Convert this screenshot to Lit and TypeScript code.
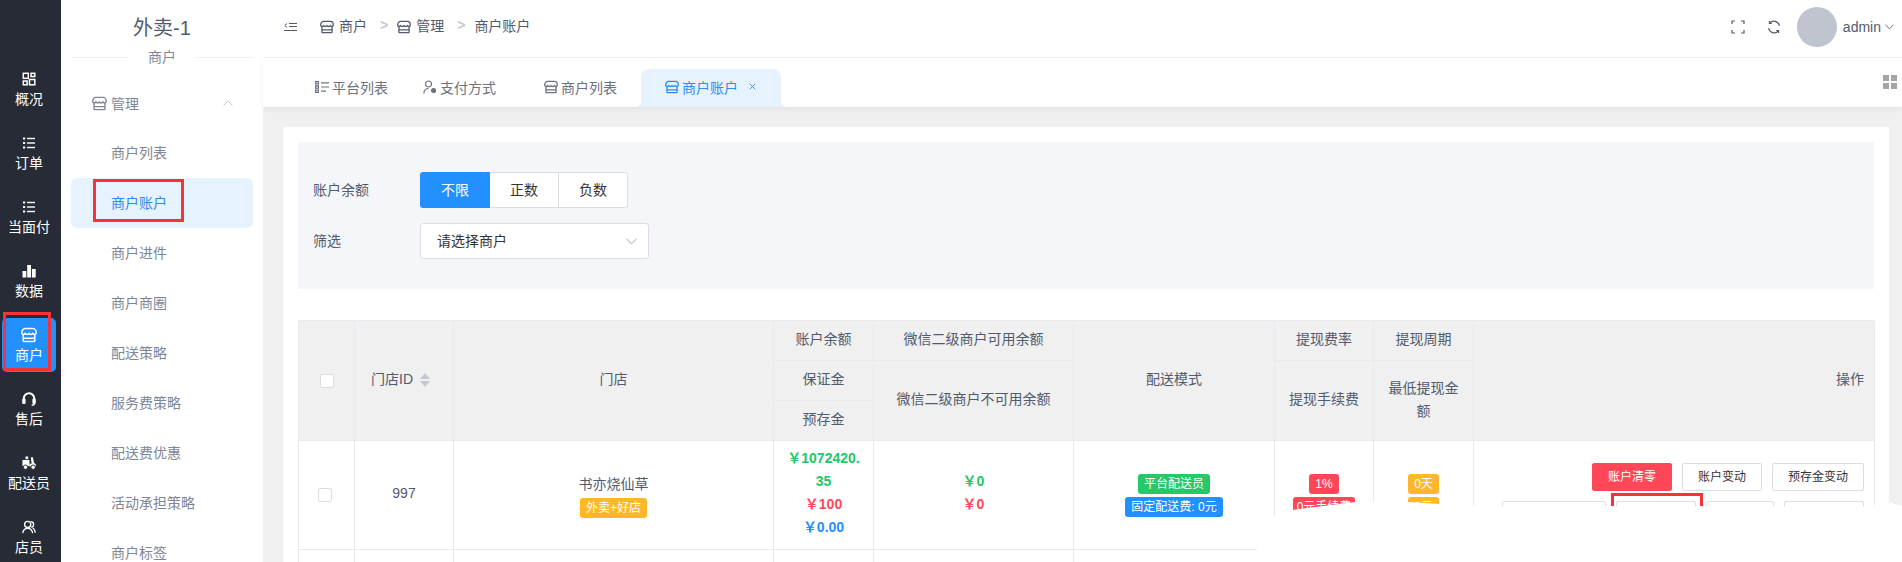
import { LitElement, html, css, svg } from "lit";
import { customElement } from "lit/decorators.js";

const storeIcon = html`<svg class="ic" viewBox="0 0 16 16" fill="none" stroke="currentColor" stroke-width="1.500" stroke-linejoin="round" stroke-linecap="round"><path d="M4.200 1.500h7.600c1.900 0 3.400 1.900 3.400 4.200 0 1-.7 1.700-1.600 1.700-.9 0-1.600-.6-1.800-1.300-.2.7-1 1.300-1.900 1.300s-1.700-.6-1.900-1.300c-.2.7-1 1.300-1.900 1.300s-1.700-.6-1.900-1.300c-.2.7-.9 1.300-1.800 1.300C1.500 7.400.8 6.700.8 5.700c0-2.300 1.500-4.200 3.400-4.200z"/><path d="M2.200 7.400v6.400c0 .4.300.7.700.7h10.200c.4 0 .7-.3.700-.7V7.400M2.200 11.300h11.600"/></svg>`;
const listIcon = html`<svg class="ic" viewBox="0 0 14 14" fill="currentColor"><rect x="1" y="1.500" width="2.200" height="2"/><rect x="5" y="1.800" width="8" height="1.400"/><rect x="1" y="6" width="2.200" height="2"/><rect x="5" y="6.300" width="8" height="1.400"/><rect x="1" y="10.500" width="2.200" height="2"/><rect x="5" y="10.800" width="8" height="1.400"/></svg>`;

const navIcons: Record<string, unknown> = {
  dash: html`<svg class="ic" viewBox="0 0 14 14" fill="none" stroke="currentColor" stroke-width="1.500"><rect x="1.300" y="1.300" width="5" height="5"/><rect x="9" y="1.300" width="3.800" height="3.200"/><rect x="1.300" y="9" width="3.800" height="3.800"/><rect x="7.500" y="7.500" width="5.300" height="5.300"/></svg>`,
  list: listIcon,
  data: html`<svg class="ic" viewBox="0 0 14 14" fill="currentColor"><rect x="0.500" y="7" width="3.800" height="6.500"/><rect x="5.200" y="1" width="3.800" height="12.500"/><rect x="9.900" y="5" width="3.800" height="8.500"/></svg>`,
  store: storeIcon,
  head: html`<svg class="ic" viewBox="1 1 14 14" fill="none" stroke="currentColor" stroke-width="2"><path d="M2.800 10V7.500a5.200 5.200 0 0 1 10.400 0V10"/><rect x="1.200" y="7.500" width="3.400" height="5.500" rx="1.200" fill="currentColor" stroke="none"/><rect x="11.400" y="7.500" width="3.400" height="5.500" rx="1.200" fill="currentColor" stroke="none"/><path d="M13.500 12c0 1.500-1 2.300-2.800 2.300" stroke-width="1.400"/></svg>`,
  bike: html`<svg class="ic" viewBox="0 0 16 16" fill="currentColor"><path d="M4 .5h3v3H4z"/><rect x=".5" y="4.500" width="8" height="7"/><path d="M10 1.500h2.500l1.200 6.300 2 1.700v2.500H8.500V8.800H11z"/><circle cx="4" cy="12.800" r="2.500" stroke="#272b35" stroke-width="1.100"/><circle cx="12.700" cy="12.800" r="2.500" stroke="#272b35" stroke-width="1.100"/></svg>`,
  staff: html`<svg class="ic" viewBox="0 0 16 16" fill="none" stroke="currentColor" stroke-width="1.500" stroke-linecap="round"><circle cx="6.500" cy="5" r="3.500"/><path d="M1 14.500c.4-3 2.500-5 5.500-5s5 2 5.500 5"/><path d="M10.500 1.800c1.800.3 2.800 1.600 2.800 3.200 0 1.500-.9 2.700-2.200 3.100M12.700 9.500c1.300.8 2.100 2.500 2.300 4.500"/></svg>`,
};

const nav = [
  ["dash", "概况"], ["list", "订单"], ["list", "当面付"], ["data", "数据"],
  ["store", "商户"], ["head", "售后"], ["bike", "配送员"], ["staff", "店员"],
];
const subItems = ["商户列表", "商户账户", "商户进件", "商户商圈", "配送策略", "服务费策略", "配送费优惠", "活动承担策略", "商户标签"];

@customElement("app-root")
export class AppRoot extends LitElement {
  static styles = css`
    :host { display: block; position: relative; width: 1902px; height: 562px; overflow: hidden; background: #f0f0f0;
      font-family: "Liberation Sans", "Noto Sans CJK SC", sans-serif; font-size: 14px; color: #515a6e; }
    * { box-sizing: border-box; }
    .ic { display: block; width: 14px; height: 14px; flex: none; }
    .app { display: flex; height: 562px; }

    .rail { width: 61px; flex: none; background: #272b35; padding: 62px 5px 0 2px; display: flex; flex-direction: column; gap: 10px; color: #fff; }
    .rail-item { position: relative; height: 54px; flex: none; display: flex; flex-direction: column; align-items: center; padding-top: 10px; border-radius: 5px; line-height: 20px; }
    .rail-item .ic { width: 14px; height: 14px; margin-bottom: 3px; }
    .rail-item.on { background: #2290ff; }
    .rail-item.on .ic { width: 16px; height: 16px; margin-top: -1px; margin-bottom: 2px; }
    .mark { position: absolute; border: 3px solid #f73339; pointer-events: none; }
    .rail-item .mark { left: 1px; top: -6px; width: 48px; height: 59px; }

    .side { width: 202px; flex: none; background: #fff; padding: 0 10px; overflow: hidden; }
    .brand { height: 57px; padding-top: 13px; text-align: center; font-size: 20px; line-height: 30px; }
    .rule { height: 1px; background: #f0f0f0; display: flex; justify-content: center; align-items: center; }
    .rule span { background: #fff; padding: 0 20px 2px; line-height: 20px; color: #808695; }
    .group { height: 50px; margin-top: 20px; display: flex; align-items: center; padding-left: 21px; color: #808695; }
    .group .ic { width: 15px; height: 15px; margin-right: 4px; }
    .group .chev { margin-left: auto; margin-right: 20px; width: 10px; height: 6px; }
    .sub { display: flex; flex-direction: column; }
    .sub-item { position: relative; height: 50px; flex: none; display: flex; align-items: center; padding: 0 0 2px 40px; color: #808695; border-radius: 6px; }
    .sub-item.on { background: #e6f3ff; color: #2d8cf0; }
    .sub-item .mark { left: 22px; top: 1px; width: 91px; height: 43px; }

    .main { flex: 1; min-width: 0; display: flex; flex-direction: column; }
    .top { height: 58px; flex: none; background: #fff; border-bottom: 1px solid #f3f3f3; display: flex; align-items: center; padding: 0 8px 4px 21px; }
    .crumb { display: flex; align-items: center; }
    .crumb .ic { margin-right: 5px; }
    .crumb span { margin-bottom: 3px; }
    .collapse { width: 13px; height: 13px; margin-right: 23px; }
    .sep { color: #c5c8ce; margin: 0 9px 3px 13px; font-weight: bold; }
    .tools { margin-left: auto; display: flex; align-items: center; }
    .tools .ic { margin-right: 22px; }
    .tools .ic:nth-child(2) { margin-right: 16px; }
    .avatar { width: 40px; height: 40px; border-radius: 50%; background: #c0c4cf; margin-right: 6px; }
    .chev-d { width: 9px; height: 6px; margin-left: 4px; }

    .tabs { height: 49px; flex: none; background: #fff; box-shadow: 0 2px 6px rgba(0,0,0,.06); display: flex; align-items: flex-end; padding-left: 52px; position: relative; z-index: 1; }
    .tab { height: 38px; display: flex; align-items: center; gap: 3px; padding-bottom: 3px; color: #6b7280; }
    .tab.t2 { margin-left: 35px; }
    .tab.t3 { margin-left: 48px; }
    .tab.on { position: relative; margin-left: 24px; width: 140px; padding-left: 24px; background: #e6f3ff; color: #2d8cf0; border-radius: 8px 8px 0 0; }
    .tab.on::before, .tab.on::after { content: ""; position: absolute; bottom: 0; width: 7px; height: 7px; }
    .tab.on::before { left: -7px; background: radial-gradient(circle at 0 0, transparent 7px, #e6f3ff 7.500px); }
    .tab.on::after { right: -7px; background: radial-gradient(circle at 100% 0, transparent 7px, #e6f3ff 7.500px); }
    .close { width: 7px; height: 7px; margin-left: 8px; }
    .grid-ic { position: absolute; right: 5px; top: 17px; width: 14px; height: 14px; display: grid; grid-template-columns: 6px 6px; gap: 2px; }
    .grid-ic i { background: #a5a5a5; }

    .body { flex: 1; min-height: 0; padding: 20px 13px 0 20px; overflow: hidden; }
    .card { background: #fff; height: 100%; padding: 15px 15px 0; overflow: hidden; }
    .filter { height: 147px; background: #f5f6fa; padding: 30px 15px 0; display: flex; flex-direction: column; gap: 15px; }
    .f-row { display: flex; align-items: center; height: 36px; }
    .f-label { width: 107px; flex: none; padding-bottom: 2px; }
    .radios { display: flex; height: 36px; color: #333; }
    .radio { display: flex; align-items: center; justify-content: center; width: 69px; padding-bottom: 2px; background: #fff; border: 1px solid #dcdee2; border-left: 0; }
    .radio:last-child { border-radius: 0 3px 3px 0; }
    .radio.on { width: 70px; background: #2290ff; color: #fff; border: 0; border-radius: 3px 0 0 3px; }
    .select { width: 229px; height: 36px; background: #fff; border: 1px solid #dcdee2; border-radius: 3px; display: flex; align-items: center; padding: 0 11px 2px 16px; color: #333; justify-content: space-between; }
    .select svg { width: 11px; height: 7px; margin-top: 2px; }

    table { margin-top: 31px; border-collapse: collapse; table-layout: fixed; width: 1576px; }
    th, td { border: 1px solid #e8eaf0; text-align: center; padding: 0 12px; font-weight: normal; line-height: 23px; word-break: break-all; }
    th { height: 40px; padding-bottom: 2px; background: #f0f0f0; }
    td { height: 109px; padding-top: 8px; padding-bottom: 8px; }
    td.txt { padding-top: 6px; padding-bottom: 10px; }
    .r { text-align: right; padding-right: 10px; }
    .cb { display: block; margin: 2px auto 0; width: 14px; height: 14px; background: #fff; border: 1px solid #dcdee2; border-radius: 2px; }
    td .cb { margin: 0 0 0 7px; }
    .sort { display: inline-flex; flex-direction: column; gap: 2px; margin: 0 7px 0 7px; vertical-align: middle; }
    .sort i { width: 0; height: 0; border-left: 5px solid transparent; border-right: 5px solid transparent; }
    .sort i:first-child { border-bottom: 6px solid #c5c8ce; }
    .sort i:last-child { border-top: 6px solid #c5c8ce; }
    .val { display: block; font-weight: bold; }
    .name { display: block; margin-bottom: 2px; }
    .g { color: #23c76a; } .rd { color: #ff4757; } .b { color: #2290ff; }
    .tag { display: inline-block; vertical-align: top; height: 20px; line-height: 20px; padding: 0 6px; font-size: 12px; color: #fff; border-radius: 3px; white-space: nowrap; }
    .tag.tight { padding: 0 4px; }
    .tag-wrap { display: flex; flex-direction: column; align-items: center; gap: 3px; }
    .tg { background: #26c967; } .ty { background: #ffb72a; } .tb { background: #2290ff; } .tr { background: #ff4757; }
    .ops { padding: 22px 10px 0; vertical-align: top; }
    .ops-row { display: flex; justify-content: flex-end; gap: 10px; margin-bottom: 10px; }
    .btn { height: 28px; display: flex; align-items: center; justify-content: center; font-size: 12px; line-height: 1; color: #333; border: 1px solid #dcdee2; border-radius: 2px; background: #fff; white-space: nowrap; }
    .btn.danger { background: #ff4757; border-color: #ff4757; color: #fff; }
    .btn.marked { position: relative; }
    .btn.marked .mark { left: -6px; top: -9px; width: 92px; height: 43px; }
    .patch { position: absolute; left: 0; top: 0; width: 1902px; height: 562px; pointer-events: none; }
  `;

  private chev(d: string, cls: string, color: string) {
    return html`<svg class=${cls} viewBox="0 0 10 6" fill="none" stroke=${color} stroke-width="1"><path d=${d}/></svg>`;
  }

  render() {
    return html`
      <div class="app">
        <nav class="rail">
          ${nav.map(([ic, label]) => html`
            <div class="rail-item ${label === "商户" ? "on" : ""}">
              ${navIcons[ic]}<span>${label}</span>
              ${label === "商户" ? html`<div class="mark"></div>` : ""}
            </div>`)}
        </nav>
        <aside class="side">
          <div class="brand">外卖-1</div>
          <div class="rule"><span>商户</span></div>
          <div class="group">${storeIcon}<span>管理</span>${this.chev("M.5 5.500 5 1l4.500 4.500", "chev", "#c5c8ce")}</div>
          <div class="sub">
            ${subItems.map((s) => html`<div class="sub-item ${s === "商户账户" ? "on" : ""}">${s}${s === "商户账户" ? html`<div class="mark"></div>` : ""}</div>`)}
          </div>
        </aside>
        <div class="main">
          <header class="top">
            <svg class="collapse" viewBox="0 0 13 13" fill="none" stroke="#515a6e" stroke-width="1"><path d="M5 3.500H13M5 6.500H13M0 10.500H13M3 3.500 .8 5.500 3 7.500"/></svg>
            <div class="crumb">
              ${storeIcon}<span>商户</span><span class="sep">&gt;</span>
              ${storeIcon}<span>管理</span><span class="sep">&gt;</span>
              <span>商户账户</span>
            </div>
            <div class="tools">
              <svg class="ic" viewBox="0 0 14 14" fill="none" stroke="#515a6e" stroke-width="1.200"><path d="M1 4V1h3M10 1h3v3M13 10v3h-3M4 13H1v-3"/></svg>
              <svg class="ic" viewBox="0 0 14 14" fill="none" stroke="#515a6e" stroke-width="1.100"><path d="M12.400 5.800A5.600 5.600 0 0 0 2.600 3.200M1.600 8.200a5.600 5.600 0 0 0 9.800 2.600"/><path d="M2.400 1v2.400h2.400M11.600 13v-2.400H9.200"/></svg>
              <div class="avatar"></div>
              <span>admin</span>
              ${this.chev("M.5.500 5 5l4.500-4.500", "chev-d", "#515a6e")}
            </div>
          </header>
          <div class="tabs">
            <div class="tab">
              <svg class="ic" viewBox="0 0 14 14" fill="none" stroke="currentColor" stroke-width="1.200"><rect x=".6" y="1.600" width="2.800" height="2.400"/><rect x=".6" y="5.800" width="2.800" height="2.400"/><rect x=".6" y="10" width="2.800" height="2.400"/><path d="M6 2.800h8M6 7h8M6 11.200h5"/></svg>
              <span>平台列表</span>
            </div>
            <div class="tab t2">
              <svg class="ic" viewBox="0 0 14 14" fill="none" stroke="currentColor" stroke-width="1.200"><circle cx="5.500" cy="4" r="3"/><path d="M.8 13.500c.3-3 2-5 4.700-5"/><circle cx="10.500" cy="10.500" r="2" fill="currentColor"/></svg>
              <span>支付方式</span>
            </div>
            <div class="tab t3">${storeIcon}<span>商户列表</span></div>
            <div class="tab on">${storeIcon}<span>商户账户</span>
              <svg class="close" viewBox="0 0 8 8" stroke="currentColor" stroke-width="1"><path d="M.8.800l6.400 6.400M7.200.800.800 7.200"/></svg>
            </div>
            <div class="grid-ic"><i></i><i></i><i></i><i></i></div>
          </div>
          <div class="body">
            <div class="card">
              <div class="filter">
                <div class="f-row">
                  <div class="f-label">账户余额</div>
                  <div class="radios">
                    <div class="radio on">不限</div><div class="radio">正数</div><div class="radio">负数</div>
                  </div>
                </div>
                <div class="f-row">
                  <div class="f-label">筛选</div>
                  <div class="select"><span>请选择商户</span>${this.chev("M.5.500 5 5l4.500-4.500", "", "#c5c8ce")}</div>
                </div>
              </div>
              <table>
                <colgroup>
                  <col style="width:56px"><col style="width:99px"><col style="width:320px"><col style="width:100px"><col style="width:200px"><col style="width:201px"><col style="width:99px"><col style="width:100px"><col style="width:401px">
                </colgroup>
                <thead>
                  <tr>
                    <th rowspan="3"><span class="cb"></span></th>
                    <th rowspan="3">门店ID<span class="sort"><i></i><i></i></span></th>
                    <th rowspan="3">门店</th>
                    <th>账户余额</th>
                    <th>微信二级商户可用余额</th>
                    <th rowspan="3">配送模式</th>
                    <th>提现费率</th>
                    <th>提现周期</th>
                    <th rowspan="3" class="r">操作</th>
                  </tr>
                  <tr>
                    <th>保证金</th>
                    <th rowspan="2">微信二级商户不可用余额</th>
                    <th rowspan="2">提现手续费</th>
                    <th rowspan="2">最低提现金额</th>
                  </tr>
                  <tr><th>预存金</th></tr>
                </thead>
                <tbody>
                  <tr>
                    <td><span class="cb"></span></td>
                    <td class="txt">997</td>
                    <td><span class="name">书亦烧仙草</span><div class="tag-wrap"><span class="tag ty">外卖+好店</span></div></td>
                    <td class="txt"><span class="val g">￥1072420.35</span><span class="val rd">￥100</span><span class="val b">￥0.00</span></td>
                    <td class="txt"><span class="val g">￥0</span><span class="val rd">￥0</span></td>
                    <td><div class="tag-wrap"><span class="tag tg">平台配送员</span><span class="tag tb">固定配送费: 0元</span></div></td>
                    <td><div class="tag-wrap"><span class="tag tr">1%</span><span class="tag tr tight">0元手续费</span></div></td>
                    <td><div class="tag-wrap"><span class="tag ty">0天</span><span class="tag ty">0元</span></div></td>
                    <td class="ops">
                      <div class="ops-row">
                        <div class="btn danger" style="width:80px">账户清零</div>
                        <div class="btn" style="width:80px">账户变动</div>
                        <div class="btn" style="width:92px">预存金变动</div>
                      </div>
                      <div class="ops-row">
                        <div class="btn" style="width:104px"></div>
                        <div class="btn marked" style="width:80px"><div class="mark"></div></div>
                        <div class="btn" style="width:68px"></div>
                        <div class="btn" style="width:80px"></div>
                      </div>
                    </td>
                  </tr>
                  <tr><td></td><td></td><td></td><td></td><td></td><td></td><td></td><td></td><td></td></tr>
                </tbody>
              </table>
            </div>
          </div>
        </div>
      </div>
      <svg class="patch" viewBox="0 0 1902 562">
        ${svg`<polygon fill="#fff" points="1257,562 1257,549 1273,517 1292,510 1355,502 1408,502 1440,504 1473,506 1863,506 1873,506 1889,502 1902,506 1902,562"/>`}
      </svg>
    `;
  }
}
